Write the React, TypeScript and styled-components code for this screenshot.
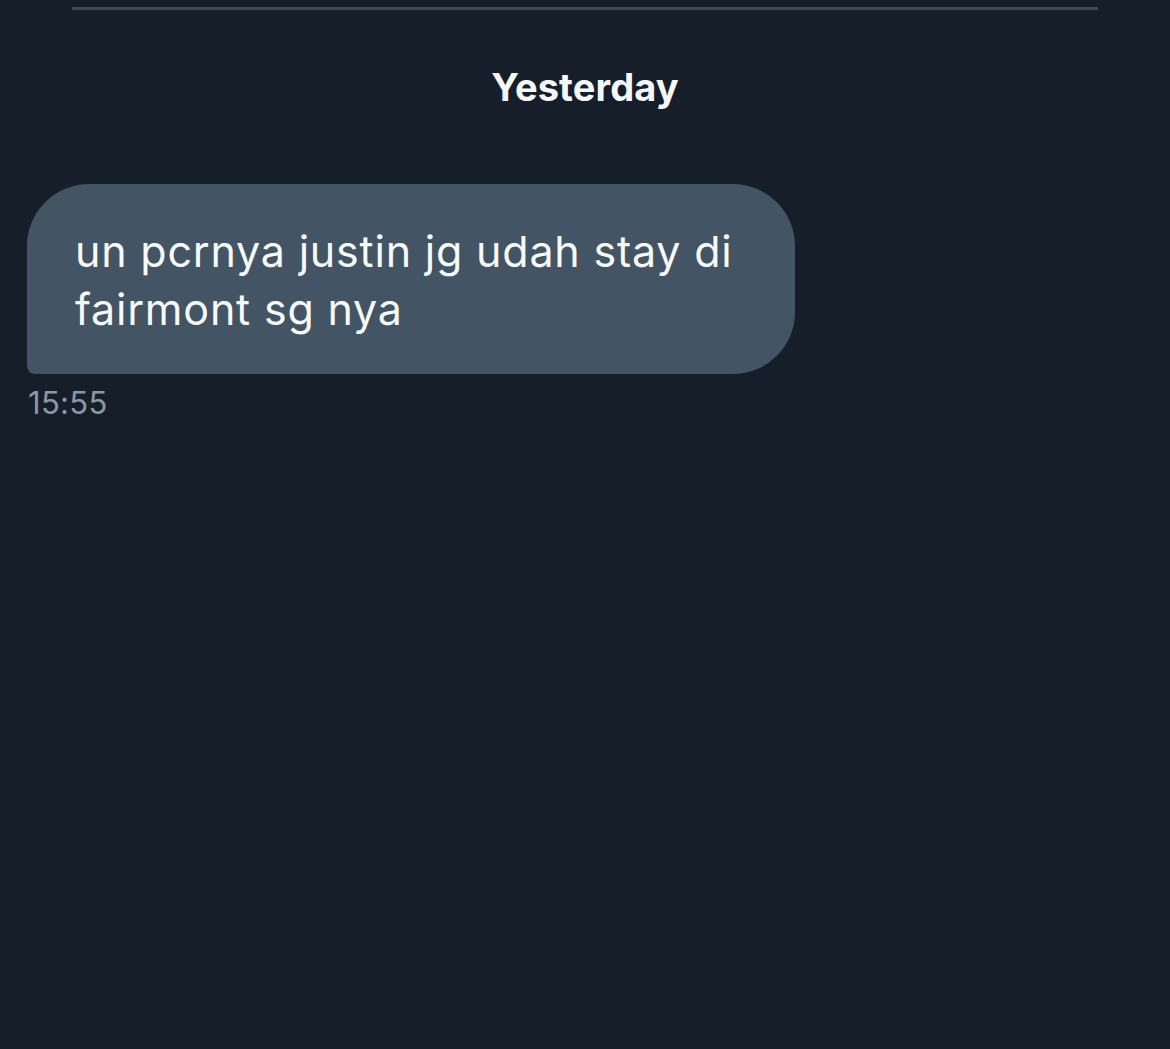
import React from "react";
import styled, { createGlobalStyle } from "styled-components";

const Global = createGlobalStyle`
  html, body { margin: 0; padding: 0; background: #161f29; }
  body { font-family: Inter, "Noto Sans", "Liberation Sans", sans-serif; -webkit-font-smoothing: antialiased; }
`;

const Page = styled.div`
  width: 1170px;
  height: 1049px;
  background: #161f29;
  display: flex;
  flex-direction: column;
  overflow: hidden;
`;

const TopRule = styled.div`
  margin: 7px 72px 0;
  height: 3px;
  background: #3f4a55;
`;

const DayLabel = styled.div`
  margin-top: 53px;
  text-align: center;
  color: #f5f7f9;
  font-size: 38px;
  font-weight: 700;
  line-height: 48px;
  letter-spacing: 0.1px;
`;

const Thread = styled.div`
  margin-top: 73px;
  padding: 0 27px;
  display: flex;
  flex-direction: column;
  align-items: flex-start;
`;

const Bubble = styled.div`
  box-sizing: border-box;
  width: 768px;
  padding: 38px 56px 36px 48px;
  background: #435464;
  border-radius: 62px 62px 62px 8px;
  color: #f7f9fa;
  font-size: 43px;
  line-height: 58px;
  letter-spacing: 0.8px;
`;

const Time = styled.div`
  margin-top: 10px;
  padding-left: 1px;
  color: #8b98a5;
  font-size: 31px;
  line-height: 38px;
  letter-spacing: 0.3px;
`;

export default function App() {
  return (
    <Page>
      <Global />
      <TopRule />
      <DayLabel>Yesterday</DayLabel>
      <Thread>
        <Bubble>un pcrnya justin jg udah stay di fairmont sg nya</Bubble>
        <Time>15:55</Time>
      </Thread>
    </Page>
  );
}
